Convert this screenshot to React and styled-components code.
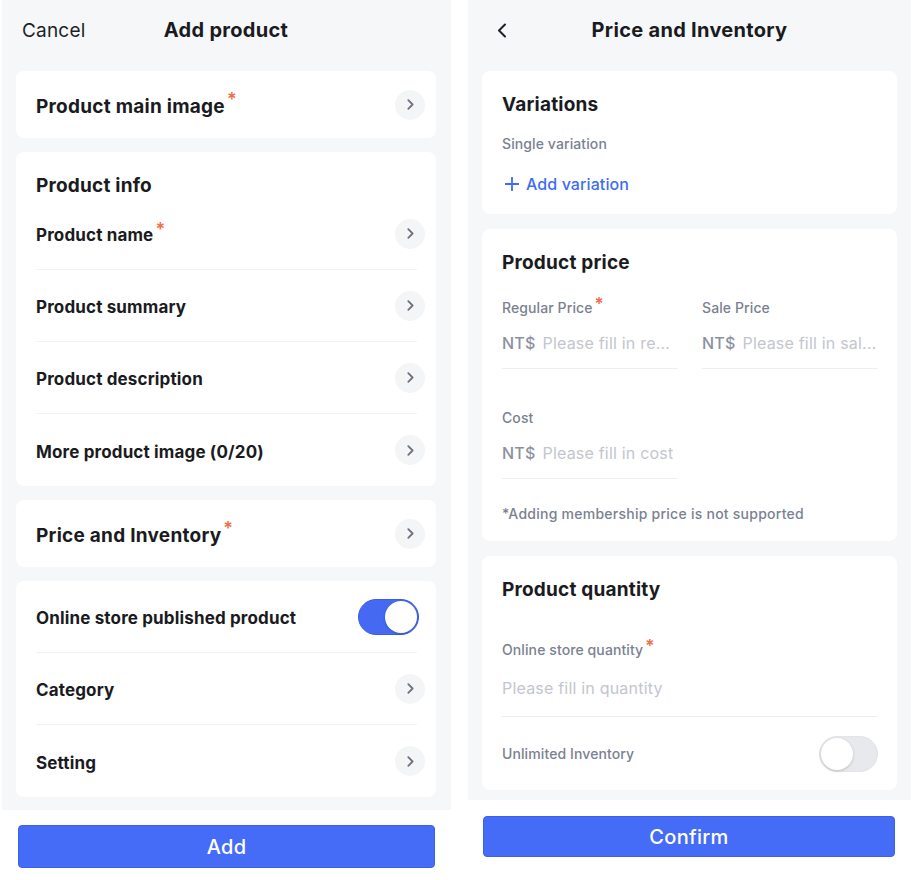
import React from 'react';
import styled, { createGlobalStyle } from 'styled-components';

const GlobalStyle = createGlobalStyle`
  html, body {
    margin: 0;
    padding: 0;
    background: #ffffff;
  }
  body {
    font-family: Inter, "Noto Sans", sans-serif;
    color: #1e1f26;
    -webkit-font-smoothing: antialiased;
  }
`;

const Page = styled.div`
  display: flex;
  gap: 17px;
  height: 880px;
  padding-left: 2px;
`;

const Screen = styled.div`
  display: flex;
  flex-direction: column;
  width: ${(p) => p.$width}px;
  height: 880px;
`;

const GrayArea = styled.div`
  background: #f6f7f9;
  padding: 0 ${(p) => p.$padRight}px ${(p) => p.$padBottom}px 14px;
`;

const Header = styled.div`
  display: grid;
  grid-template-columns: 1fr auto 1fr;
  align-items: center;
  height: 60px;
  padding: 0 6px;
  margin: 0 -14px 11px;
`;

const HeaderSide = styled.div`
  display: flex;
  align-items: center;
  padding-left: ${(p) => p.$pad || 0}px;
  font-size: 19px;
  letter-spacing: 0.2px;
  color: #1e1f26;
`;

const Title = styled.div`
  font-size: 20px;
  font-weight: 700;
  letter-spacing: 0.3px;
  color: #1a1b21;
`;

const CardList = styled.div`
  display: flex;
  flex-direction: column;
  gap: ${(p) => p.$gap}px;
`;

const Card = styled.div`
  background: #ffffff;
  border-radius: 8px;
  padding: ${(p) => p.$pad || '0 11px 0 20px'};
`;

const CardTitle = styled.div`
  font-size: 19px;
  line-height: 24px;
  font-weight: 700;
  letter-spacing: 0.2px;
  color: #1a1b21;
  padding-top: 1px;
  margin-bottom: ${(p) => p.$mb || 0}px;
`;

const Row = styled.div`
  display: flex;
  align-items: center;
  justify-content: space-between;
  height: ${(p) => p.$height || 72}px;
  margin-right: 8px;
  border-bottom: ${(p) => (p.$last ? 'none' : '1px solid #f1f2f4')};
  box-sizing: border-box;
`;

const RowLabel = styled.div`
  font-size: ${(p) => (p.$big ? 19 : 17)}px;
  font-weight: 700;
  letter-spacing: ${(p) => (p.$big ? 0.25 : 0.15)}px;
  color: #1a1b21;
  display: flex;
  align-items: flex-start;
  padding-top: 3px;
`;

const Star = styled.span`
  color: #f26d4b;
  font-size: ${(p) => p.$size || 18}px;
  font-weight: 600;
  line-height: 1;
  margin-left: 2px;
  margin-top: ${(p) => p.$top || -4}px;
`;

const ChevronButton = styled.div`
  width: 30px;
  height: 30px;
  border-radius: 50%;
  background: #f4f5f7;
  display: flex;
  align-items: center;
  justify-content: center;
  margin-right: -8px;
  flex-shrink: 0;
`;

const Toggle = styled.div`
  width: ${(p) => p.$w}px;
  height: 36px;
  border-radius: 18px;
  box-sizing: border-box;
  background: ${(p) => (p.$on ? '#4569f2' : '#e8e9ec')};
  border: 1px solid ${(p) => (p.$on ? '#3a5de6' : '#e3e4e7')};
  display: flex;
  align-items: center;
  justify-content: ${(p) => (p.$on ? 'flex-end' : 'flex-start')};
  padding: 0 1px;
  margin-right: ${(p) => p.$mr || 0}px;
`;

const Knob = styled.div`
  width: 32px;
  height: 32px;
  border-radius: 50%;
  background: #ffffff;
  box-shadow: 0 1px 3px rgba(0, 0, 0, 0.18);
`;

const Footer = styled.div`
  flex: 1;
  background: #ffffff;
  padding: ${(p) => p.$pad};
`;

const PrimaryButton = styled.button`
  width: 100%;
  height: ${(p) => p.$h}px;
  background: #456cf6;
  border: 1px solid #3b60ea;
  border-radius: 4px;
  color: #ffffff;
  font-family: Inter, "Noto Sans", sans-serif;
  font-size: 20px;
  font-weight: 500;
  letter-spacing: 0.3px;
`;

const SubText = styled.div`
  font-size: 14px;
  line-height: 20px;
  color: #7a8191;
  font-weight: 500;
  letter-spacing: 0.1px;
  margin-top: ${(p) => p.$mt || 0}px;
  display: flex;
  align-items: flex-start;
`;

const AddLink = styled.div`
  display: flex;
  align-items: center;
  gap: 7px;
  margin-top: 19px;
  height: 22px;
  font-size: 16px;
  font-weight: 500;
  letter-spacing: 0.1px;
  color: #3e6cf4;
  padding-left: 3px;
`;

const PriceGrid = styled.div`
  display: grid;
  grid-template-columns: 176px 176px;
  column-gap: 24px;
  margin-top: ${(p) => p.$mt || 0}px;
`;

const Field = styled.div`
  display: flex;
  flex-direction: column;
`;

const InputLine = styled.div`
  display: flex;
  align-items: center;
  gap: 7px;
  height: ${(p) => p.$h || 51}px;
  border-bottom: 1px solid #eceef1;
  box-sizing: border-box;
  font-size: 16px;
  letter-spacing: 0.2px;
  white-space: nowrap;
  overflow: hidden;
`;

const Currency = styled.span`
  color: #8b91a0;
  font-weight: 500;
`;

const Placeholder = styled.span`
  color: #c3c6ce;
  overflow: hidden;
  text-overflow: ellipsis;
`;

const Note = styled.div`
  font-size: 14px;
  line-height: 20px;
  font-weight: 500;
  letter-spacing: 0.25px;
  color: #7a8191;
  margin-top: 25px;
`;

const InventoryRow = styled.div`
  display: flex;
  align-items: center;
  justify-content: space-between;
  height: 73px;
`;

const Chevron = () => (
  <svg width="7" height="11" viewBox="0 0 7 11" fill="none">
    <path d="M1.3 1.2 L5.6 5.5 L1.3 9.8" stroke="#6c7281" strokeWidth="1.8" strokeLinecap="round" strokeLinejoin="round" />
  </svg>
);

const BackIcon = () => (
  <svg width="10" height="15" viewBox="0 0 10 15" fill="none">
    <path d="M8 1.5 L2 7.5 L8 13.5" stroke="#1e1f26" strokeWidth="2" strokeLinecap="round" strokeLinejoin="round" />
  </svg>
);

const PlusIcon = () => (
  <svg width="14" height="14" viewBox="0 0 14 14" fill="none">
    <path d="M7 0.5 V13.5 M0.5 7 H13.5" stroke="#3e6cf4" strokeWidth="1.8" strokeLinecap="round" />
  </svg>
);

const NavRow = ({ label, required, last, big, height }) => (
  <Row $last={last} $height={height}>
    <RowLabel $big={big}>
      {label}
      {required && <Star>*</Star>}
    </RowLabel>
    <ChevronButton>
      <Chevron />
    </ChevronButton>
  </Row>
);

const productInfoRows = [
  { label: 'Product name', required: true },
  { label: 'Product summary' },
  { label: 'Product description' },
  { label: 'More product image (0/20)' },
];

const AddProductScreen = () => (
  <Screen $width={449}>
    <GrayArea $padRight={15} $padBottom={13}>
      <Header>
        <HeaderSide $pad={14}>Cancel</HeaderSide>
        <Title>Add product</Title>
        <HeaderSide />
      </Header>
      <CardList $gap={14}>
        <Card>
          <NavRow label="Product main image" required big last height={67} />
        </Card>
        <Card $pad="21px 11px 0 20px">
          <CardTitle>Product info</CardTitle>
          {productInfoRows.map((row, index) => (
            <NavRow
              key={row.label}
              label={row.label}
              required={row.required}
              last={index === productInfoRows.length - 1}
            />
          ))}
        </Card>
        <Card>
          <NavRow label="Price and Inventory" required big last height={67} />
        </Card>
        <Card>
          <Row>
            <RowLabel>Online store published product</RowLabel>
            <Toggle $on $w={61} $mr={-2}>
              <Knob />
            </Toggle>
          </Row>
          <NavRow label="Category" />
          <NavRow label="Setting" last />
        </Card>
      </CardList>
    </GrayArea>
    <Footer $pad="15px 16px 0">
      <PrimaryButton $h={43}>Add</PrimaryButton>
    </Footer>
  </Screen>
);

const PriceScreen = () => (
  <Screen $width={443}>
    <GrayArea $padRight={14} $padBottom={10}>
      <Header>
        <HeaderSide $pad={23}>
          <BackIcon />
        </HeaderSide>
        <Title>Price and Inventory</Title>
        <HeaderSide />
      </Header>
      <CardList $gap={15}>
        <Card $pad="21px 19px 19px 20px">
          <CardTitle>Variations</CardTitle>
          <SubText $mt={17}>Single variation</SubText>
          <AddLink>
            <PlusIcon />
            Add variation
          </AddLink>
        </Card>
        <Card $pad="21px 19px 17px 20px">
          <CardTitle>Product price</CardTitle>
          <PriceGrid $mt={23}>
            <Field>
              <SubText>
                Regular Price<Star $size={17} $top={-2}>*</Star>
              </SubText>
              <InputLine>
                <Currency>NT$</Currency>
                <Placeholder>Please fill in re...</Placeholder>
              </InputLine>
            </Field>
            <Field>
              <SubText>Sale Price</SubText>
              <InputLine>
                <Currency>NT$</Currency>
                <Placeholder>Please fill in sal...</Placeholder>
              </InputLine>
            </Field>
          </PriceGrid>
          <PriceGrid $mt={39}>
            <Field>
              <SubText>Cost</SubText>
              <InputLine>
                <Currency>NT$</Currency>
                <Placeholder>Please fill in cost</Placeholder>
              </InputLine>
            </Field>
          </PriceGrid>
          <Note>*Adding membership price is not supported</Note>
        </Card>
        <Card $pad="21px 19px 0 20px">
          <CardTitle>Product quantity</CardTitle>
          <SubText $mt={38}>
            Online store quantity<Star $size={17} $top={-2}>*</Star>
          </SubText>
          <InputLine $h={57}>
            <Placeholder>Please fill in quantity</Placeholder>
          </InputLine>
          <InventoryRow>
            <SubText>Unlimited Inventory</SubText>
            <Toggle $w={59}>
              <Knob />
            </Toggle>
          </InventoryRow>
        </Card>
      </CardList>
    </GrayArea>
    <Footer $pad="16px 16px 0 15px">
      <PrimaryButton $h={41}>Confirm</PrimaryButton>
    </Footer>
  </Screen>
);

export default function App() {
  return (
    <>
      <GlobalStyle />
      <Page>
        <AddProductScreen />
        <PriceScreen />
      </Page>
    </>
  );
}
